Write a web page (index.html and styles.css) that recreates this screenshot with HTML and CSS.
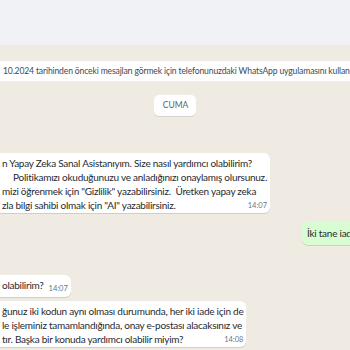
FILE: index.html
```html
<!DOCTYPE html>
<html lang="tr">
<head>
  <meta charset="UTF-8" />
  <title>Sohbet</title>
  <link rel="stylesheet" href="styles.css">
</head>
<body>
  <div class="top-bar"></div>

  <div class="chat">
    <div class="notice">10.2024 tarihinden önceki mesajları görmek için telefonunuzdaki WhatsApp uygulamasını kullanın.</div>

    <div class="day"><span>CUMA</span></div>

    <div class="msg msg-in first">
      <div class="text">n Yapay Zeka Sanal Asistanıyım. Size nasıl yardımcı olabilirim?<br><span class="indent"></span>Politikamızı okuduğunuzu ve anladığınızı onaylamış olursunuz.<br>mizi öğrenmek için "Gizlilik" yazabilirsiniz.&nbsp; Üretken yapay zeka<br>zla bilgi sahibi olmak için "AI" yazabilirsiniz.</div>
      <div class="time">14:07</div>
    </div>

    <div class="msg msg-out">
      <div class="text">İki tane iade kodum var</div>
    </div>

    <div class="msg msg-in short">
      <div class="text">olabilirim?</div>
      <span class="time">14:07</span>
    </div>

    <div class="msg msg-in">
      <div class="text">ğunuz iki kodun aynı olması durumunda, her iki iade için de<br>le işleminiz tamamlandığında, onay e-postası alacaksınız ve<br>tır. Başka bir konuda yardımcı olabilir miyim?</div>
      <div class="time">14:08</div>
    </div>
  </div>
</body>
</html>
```

FILE: styles.css
```css
html, body {
  margin: 0;
  padding: 0;
  width: 350px;
  height: 350px;
  overflow: hidden;
  font-family: "Segoe UI", Lato, sans-serif;
  color: #111b21;
}

.top-bar {
  height: 45px;
  background-color: #f0f2f5;
}

.chat {
  min-height: 305px;
  background-color: #efeae2;
  display: flex;
  flex-direction: column;
  padding-top: 16px;
  box-sizing: border-box;
}

.chat > * {
  flex-shrink: 0;
}

.notice {
  background: #ffffff;
  height: 20px;
  line-height: 20px;
  padding-left: 3px;
  font-size: 8.6px;
  letter-spacing: -0.15px;
  color: #3b4a54;
  white-space: nowrap;
  overflow: hidden;
}

.day {
  display: flex;
  justify-content: center;
  margin-top: 14px;
}

.day span {
  background: white;
  border-radius: 5px;
  padding: 0 8px 0 9px;
  height: 21px;
  line-height: 21px;
  font-size: 8.5px;
  color: #54656f;
  box-shadow: 0 1px 0.5px rgba(11, 20, 26, 0.1);
}

.msg {
  box-shadow: 0 1px 0.5px rgba(11, 20, 26, 0.13);
  font-size: 10px;
  letter-spacing: -0.25px;
  line-height: 14px;
  color: #1f2a30;
}

.msg-in {
  align-self: flex-start;
  background: white;
  margin-left: -10px;
  padding: 3px 3px 1px 12px;
  border-radius: 0 6px 6px 0;
  display: grid;
}

.msg-in .text,
.msg-in .time {
  grid-area: 1 / 1;
}

.msg-in .time {
  justify-self: end;
  align-self: end;
  margin-bottom: 1px;
}

.first {
  margin-top: 37px;
}

.msg-out {
  align-self: flex-start;
  background: #d9fdd3;
  margin-top: 9px;
  margin-left: 302px;
  padding: 4px 8px 5px 5px;
  white-space: nowrap;
  border-radius: 6px 0 0 6px;
}

.short {
  margin-top: 30px;
  display: flex;
  align-items: flex-end;
  gap: 5px;
  padding-bottom: 5px;
}

.short + .msg-in {
  margin-top: 4px;
}

.indent {
  display: inline-block;
  width: 11px;
}

.time {
  font-size: 7.5px;
  line-height: 10px;
  letter-spacing: 0;
  color: #667781;
}

.short .time {
  margin-bottom: -2px;
}
```
